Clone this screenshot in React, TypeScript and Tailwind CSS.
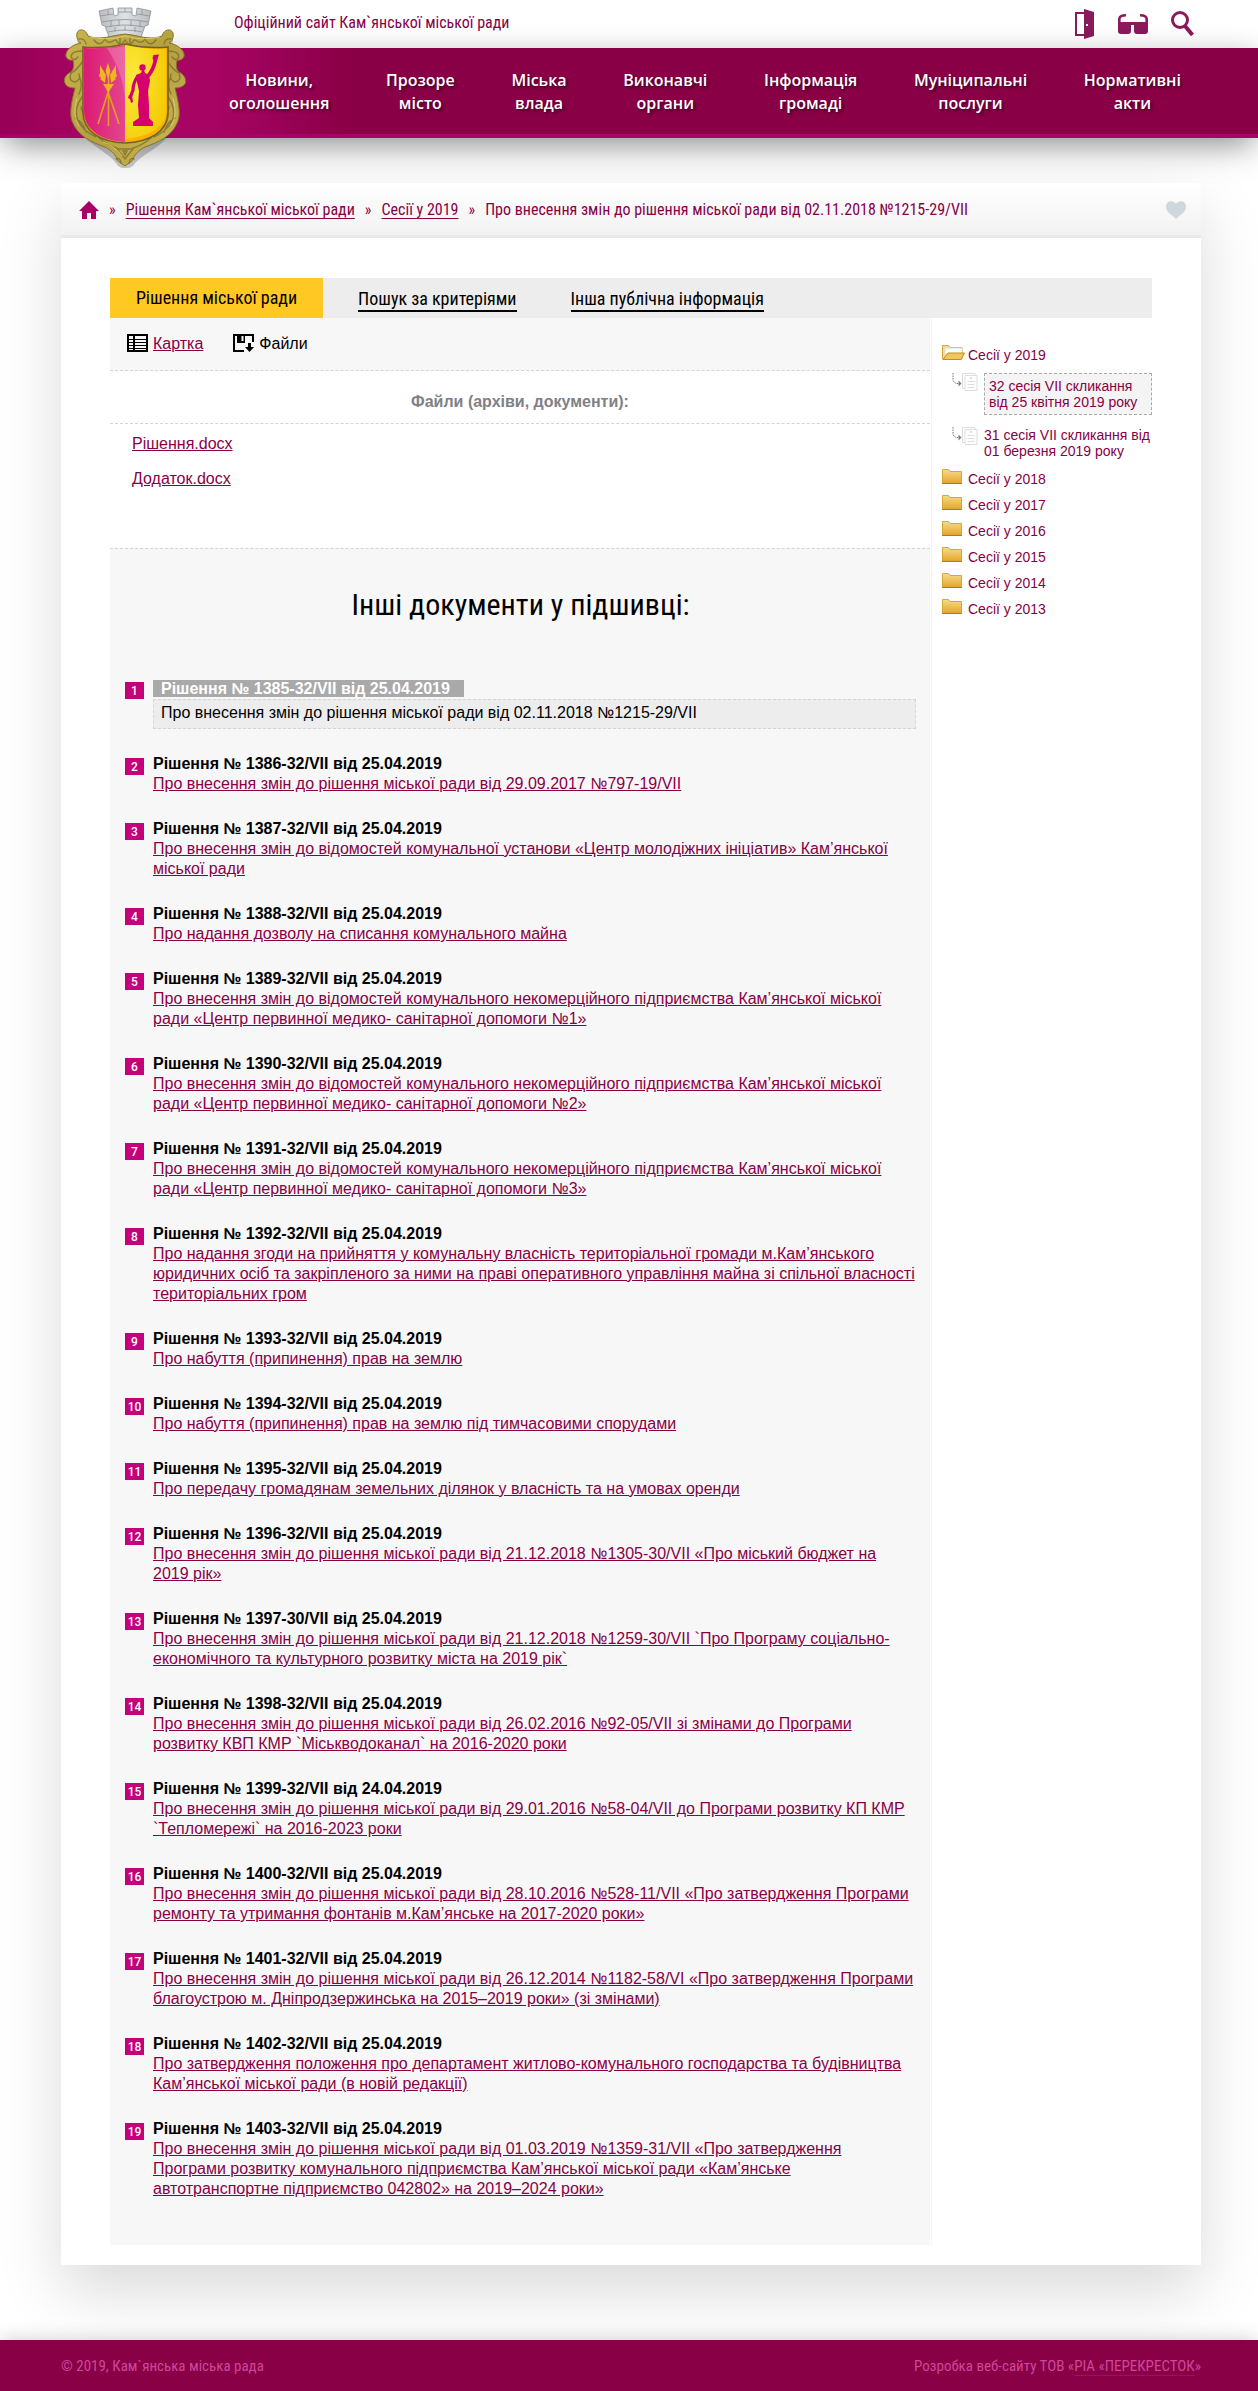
import React from "react";

const CONDENSED = "font-['Roboto_Condensed',Roboto,sans-serif]";

const navItems: [string, string][] = [
  ["Новини,", "оголошення"],
  ["Прозоре", "місто"],
  ["Міська", "влада"],
  ["Виконавчі", "органи"],
  ["Інформація", "громаді"],
  ["Муніципальні", "послуги"],
  ["Нормативні", "акти"],
];

const documents: [string, string][] = [
  ["Рішення № 1386-32/VII від 25.04.2019", "Про внесення змін до рішення міської ради від 29.09.2017 №797-19/VII"],
  ["Рішення № 1387-32/VII від 25.04.2019", "Про внесення змін до відомостей комунальної установи «Центр молодіжних ініціатив» Кам’янської міської ради"],
  ["Рішення № 1388-32/VII від 25.04.2019", "Про надання дозволу на списання комунального майна"],
  ["Рішення № 1389-32/VII від 25.04.2019", "Про внесення змін до відомостей комунального некомерційного підприємства Кам’янської міської ради «Центр первинної медико- санітарної допомоги №1»"],
  ["Рішення № 1390-32/VII від 25.04.2019", "Про внесення змін до відомостей комунального некомерційного підприємства Кам’янської міської ради «Центр первинної медико- санітарної допомоги №2»"],
  ["Рішення № 1391-32/VII від 25.04.2019", "Про внесення змін до відомостей комунального некомерційного підприємства Кам’янської міської ради «Центр первинної медико- санітарної допомоги №3»"],
  ["Рішення № 1392-32/VII від 25.04.2019", "Про надання згоди на прийняття у комунальну власність територіальної громади м.Кам’янського юридичних осіб та закріпленого за ними на праві оперативного управління майна зі спільної власності територіальних гром"],
  ["Рішення № 1393-32/VII від 25.04.2019", "Про набуття (припинення) прав на землю"],
  ["Рішення № 1394-32/VII від 25.04.2019", "Про набуття (припинення) прав на землю під тимчасовими спорудами"],
  ["Рішення № 1395-32/VII від 25.04.2019", "Про передачу громадянам земельних ділянок у власність та на умовах оренди"],
  ["Рішення № 1396-32/VII від 25.04.2019", "Про внесення змін до рішення міської ради від 21.12.2018 №1305-30/VII «Про міський бюджет на 2019 рік»"],
  ["Рішення № 1397-30/VII від 25.04.2019", "Про внесення змін до рішення міської ради від 21.12.2018 №1259-30/VII `Про Програму соціально-економічного та культурного розвитку міста на 2019 рік`"],
  ["Рішення № 1398-32/VII від 25.04.2019", "Про внесення змін до рішення міської ради від 26.02.2016 №92-05/VII зі змінами до Програми розвитку КВП КМР `Міськводоканал` на 2016-2020 роки"],
  ["Рішення № 1399-32/VII від 24.04.2019", "Про внесення змін до рішення міської ради від 29.01.2016 №58-04/VII до Програми розвитку КП КМР `Тепломережі` на 2016-2023 роки"],
  ["Рішення № 1400-32/VII від 25.04.2019", "Про внесення змін до рішення міської ради від 28.10.2016 №528-11/VII «Про затвердження Програми ремонту та утримання фонтанів м.Кам’янське на 2017-2020 роки»"],
  ["Рішення № 1401-32/VII від 25.04.2019", "Про внесення змін до рішення міської ради від 26.12.2014 №1182-58/VI «Про затвердження Програми благоустрою м. Дніпродзержинська на 2015–2019 роки» (зі змінами)"],
  ["Рішення № 1402-32/VII від 25.04.2019", "Про затвердження положення про департамент житлово-комунального господарства та будівництва Кам’янської міської ради (в новій редакції)"],
  ["Рішення № 1403-32/VII від 25.04.2019", "Про внесення змін до рішення міської ради від 01.03.2019 №1359-31/VII «Про затвердження Програми розвитку комунального підприємства Кам’янської міської ради «Кам’янське автотранспортне підприємство 042802» на 2019–2024 роки»"],
];

function Crest() {
  return (
    <svg viewBox="0 0 124 162" className="h-[162px] w-[124px]" aria-hidden="true">
      <defs>
        <linearGradient id="gold" x1="0" x2="1" y1="0" y2="1">
          <stop offset="0" stopColor="#c9b44e" />
          <stop offset=".5" stopColor="#b5a040" />
          <stop offset="1" stopColor="#cdb852" />
        </linearGradient>
        <linearGradient id="pink" x1="0" x2="1">
          <stop offset="0" stopColor="#dc1a74" />
          <stop offset="1" stopColor="#e4458f" />
        </linearGradient>
        <radialGradient id="yellow" cx=".2" cy=".35" r=".9">
          <stop offset="0" stopColor="#fdea3c" />
          <stop offset="1" stopColor="#f2c800" />
        </radialGradient>
        <linearGradient id="stone" x1="0" x2="1">
          <stop offset="0" stopColor="#b8bcc0" />
          <stop offset=".5" stopColor="#dfe2e4" />
          <stop offset="1" stopColor="#b8bcc0" />
        </linearGradient>
      </defs>
      <path d="M14 32C20 50 4 100 20 128 35 142 50 148 55 158l7 4 8-4c6-10 20-14 34-28 18-30 2-70 6-98z" fill="#000" opacity=".2" transform="translate(0 2)" />
      {/* mural crown */}
      <path d="M36 5l14-3 1 8 4-1V2h14v7l4 1 1-8 14 3-3 14-3 1-4 11q-16-4-32 0l-4-11-3-1z" fill="url(#stone)" stroke="#8d9194" strokeWidth=".8" />
      <path d="M37 10l13-2M55 6h14M74 8l13 2M39 16q23-5 46 0M43 21q19-4 38 0M45 26q17-4 34 0M45 4v5M62 2v4M79 4v5M48 15v6M56 14v6M68 14v6M77 15v6M52 21v5M62 20v5M72 21v5" stroke="#8d9194" strokeWidth=".8" fill="none" />
      {/* cartouche */}
      <path d="M14 27c2-5 9-4 11 3 10 4 20 1 30-1q7-2 14 0c10 2 20 5 30 1 2-7 9-8 11-3 1 4-1 9-4 10 6 1 14 5 15 11 1 4-3 7-7 6-1 5-1 10 2 12 5 2 8 8 6 12-2 3-7 4-10 4 3 12 6 25 3 33-6 16-20 21-33 26-8 4-11 9-13 14l-7 5-7-5c-2-5-5-10-13-14-13-5-27-10-33-26-3-8 0-21 3-33-4 0-9-1-10-5-2-4 1-9 6-11 3-3 3-7 2-12-4 1-8-2-7-6 1-6 9-10 15-11-3-1-5-6-4-10z" fill="url(#gold)" stroke="#86742a" strokeWidth="1" />
      <g fill="none" stroke="#74682c" strokeWidth="1.4" strokeLinecap="round" opacity=".7">
        <path d="M16 33q6-1 7 5M108 33q-6-1-7 5M19 45q-11 0-11 6 3 5 7 0M105 45q11 0 11 6-3 5-7 0M20 55q-7 10-12 12-3 8 4 9 6-2 4-8M104 55q7 10 12 12 3 8-4 9-6-2-4-8M17 72q3 8-1 16M107 72q-3 8 1 16" />
        <path d="M31 34q6 8 11-1 3 6 10 1M93 34q-6 8-11-1-3 6-10 1M53 34q4 8 9 0 5 8 9 0M57 32v6M67 32v6" />
        <path d="M19 91q-9 12-4 24 5 10 18 16M105 91q9 12 4 24-5 10-18 16M18 101q4 14 14 23M106 101q-4 14-14 23M12 112q8 4 11 14M112 112q-8 4-11 14M36 132q10 8 18 10M88 132q-10 8-18 10" />
        <path d="M54 143h16l-8 10zM60 145h4l-2 4zM53 153q4-2 5 4M71 153q-4-2-5 4" />
      </g>
      <g fill="none" stroke="#e2d27a" strokeWidth="1" opacity=".8">
        <path d="M27 31q18 4 35-1 17 5 35 1M14 92q-5 18 2 28M110 92q5 18-2 28M40 136q12 4 19 14" />
      </g>
      {/* shield */}
      <path d="M20 41q22 2 42-3 22 5 43 3v65c0 20-19 30-43 31-24-1-42-11-42-31z" fill="#fcb000" stroke="#6e6228" strokeWidth="1.6" />
      <path d="M21 42q22 1 41-3v97c-22-1-41-11-41-31z" fill="url(#pink)" />
      <path d="M62 39q20 5 41 4v61c0 18-18 27-41 29z" fill="url(#yellow)" />
      <path d="M44 42q9 0 18-2v54Q60 66 44 42z" fill="#fff" opacity=".2" />
      {/* torches */}
      <g stroke="#e0a020" strokeWidth="1.6" fill="none">
        <path d="M35 118l12-38M45.500 120V68M56 118L43 80" />
      </g>
      <path d="M45 57l2.500 8-2.500 8-2.500-8zM37 59l6 10-1 8-5-4 1-1-2-2 1-3zM53 59l-6 10 1 8 5-4-1-1 2-2-1-3zM40 78h11l-5.500 8z" fill="#eeb71f" />
      {/* figure */}
      <g fill="#d4006f">
        <circle cx="79.500" cy="61.500" r="3.200" />
        <path d="M90.500 49l5.500-.5-2 6.500h-3.500l-1-3z" />
        <path d="M73 69l5-2 1-3h2l1 3 4 2 1 6-2 10 1 14v13l4 4v4H70v-4l6-4-1-13 1-14-2-9z" />
        <path d="M84.500 70.500Q90 65 92.500 54" fill="none" stroke="#d4006f" strokeWidth="3.600" />
        <path d="M74 71Q70 78 70 84L67.500 91" fill="none" stroke="#d4006f" strokeWidth="3.200" />
        <path d="M66 89l3 1 1 6-2 1-1-4-2-1z" />
      </g>
    </svg>
  );
}

function DoorIcon() {
  return (
    <svg viewBox="0 0 20 30" className="h-[30px] w-5" fill="#8b1a5b" aria-hidden="true">
      <path d="M0 3h9v2H2v20h7v2H0z" />
      <path fillRule="evenodd" d="M9 0l10 3v24L9 30zM11 15v2h2v-2z" />
    </svg>
  );
}

function GlassesIcon() {
  return (
    <svg viewBox="0 0 30 20" className="h-5 w-[30px]" aria-hidden="true">
      <path d="M1.300 10V5Q1.500 1.300 8 1.300M28.700 10V5Q28.500 1.300 22 1.300" fill="none" stroke="#8b1a5b" strokeWidth="2.600" />
      <path d="M0 8h30v9q0 3-3 3h-8q-3 0-3-3v-6h-3v6q0 3-3 3H3q-3 0-3-3z" fill="#8b1a5b" />
    </svg>
  );
}

function SearchIcon() {
  return (
    <svg viewBox="0 0 24 26" className="h-[26px] w-6" fill="none" stroke="#8b1a5b" aria-hidden="true">
      <circle cx="9" cy="9" r="7.500" strokeWidth="3" />
      <path d="M14 15l7.500 9" strokeWidth="4" />
    </svg>
  );
}

function HomeIcon() {
  return (
    <svg viewBox="0 0 20 18" className="h-[18px] w-5" fill="#a80064" aria-hidden="true">
      <path d="M10 0l10 10h-3v8h-5v-6H8v6H3v-8H0z" />
    </svg>
  );
}

function HeartIcon() {
  return (
    <svg viewBox="0 0 20 18" className="h-[18px] w-5" fill="#d0d7dc" aria-hidden="true">
      <path d="M10 3C8-1 0-1 0 6c0 5 6 8 10 12 4-4 10-7 10-12 0-7-8-7-10-3z" />
    </svg>
  );
}

function CardIcon() {
  return (
    <svg viewBox="0 0 21 18" className="h-[18px] w-[21px]" fill="none" stroke="#000" aria-hidden="true">
      <rect x="1" y="1" width="19" height="16" strokeWidth="2" />
      <path d="M2 5.500h17M2 8.500h17M2 11.500h17M2 14.500h17" />
      <path d="M7 2v14" strokeWidth="2" />
    </svg>
  );
}

function SaveIcon() {
  return (
    <svg viewBox="0 0 21 18" className="h-[18px] w-[21px]" aria-hidden="true">
      <path d="M11 17H1V1h19v7" fill="none" stroke="#000" strokeWidth="2" />
      <path d="M4 1h8v8H4zM15 9h3v4h3l-4.500 5-4.500-5h3z" />
      <path d="M8.500 2h2v5h-2z" fill="#f7f7f7" />
    </svg>
  );
}

function FolderIcon() {
  return (
    <svg viewBox="0 0 20 15" className="h-[15px] w-5" aria-hidden="true">
      <defs>
        <linearGradient id="folder" x1="0" x2="0" y1="0" y2="1">
          <stop offset="0" stopColor="#f6dc8c" />
          <stop offset="1" stopColor="#e5a52c" />
        </linearGradient>
      </defs>
      <path d="M.5 14V.5h6L8 2.500h11.500V14z" fill="url(#folder)" stroke="#dca62c" />
      <path d="M0 14.500h20" stroke="#b97812" />
    </svg>
  );
}

function OpenFolderIcon() {
  return (
    <svg viewBox="0 0 23 15" className="h-[15px] w-[23px]" aria-hidden="true">
      <path d="M.5 14V.5h6L8 2.500h12V14z" fill="#f6dc8c" stroke="#dca62c" />
      <path d="M3 3h17v6H3z" fill="#fff" stroke="#ddd" />
      <path d="M1 14.500L6 8h16.500l-3.500 6.500z" fill="#efc75f" stroke="#c98c18" />
    </svg>
  );
}

function SheetIcon() {
  return (
    <svg viewBox="0 0 26 18" className="h-[18px] w-[26px]" fill="none" aria-hidden="true">
      <path d="M1 0v8l3 2.500h4" stroke="#777" strokeDasharray="1.500 1" />
      <path d="M6.500 7.500v6l3-3z" fill="#777" />
      <path d="M13 15.500h-2.500V.5H23V2" stroke="#ddd" />
      <path d="M13 2.500h12v15H13zM15.500 8.500h7M15.500 11.500h7M15.500 14.500h7" stroke="#ddd" />
      <path d="M18 4h2v2h-2z" fill="#ddd" />
    </svg>
  );
}

function Badge({ n }: { n: number }) {
  return (
    <span className="mt-1 flex h-[17px] w-[19px] shrink-0 items-center justify-center bg-[#c4007a] font-['Roboto',sans-serif] text-xs font-medium text-white">
      {n}
    </span>
  );
}

function SideFolder({ year, open = false }: { year: number; open?: boolean }) {
  return (
    <a href="#" className="flex h-[26px] gap-1.5">
      <span className="w-5">{open ? <span className="flex w-[23px]"><OpenFolderIcon /></span> : <FolderIcon />}</span>
      <span className="pt-0.5">Сесії у {year}</span>
    </a>
  );
}

export default function App() {
  return (
    <div className="overflow-hidden bg-white font-['Liberation_Sans',Arial,sans-serif] text-base leading-5 text-black">
      <header>
        <div className="pl-1">
          <div className="mx-auto flex h-12 max-w-[1140px] items-start justify-between pl-[173px] pr-1.5">
            <p className={`${CONDENSED} pt-[13px] text-[#890046]`}>Офіційний сайт Кам`янської міської ради</p>
            <div className="flex items-center gap-[23px] pt-[9px]">
              <button type="button" aria-label="Вхід"><DoorIcon /></button>
              <button type="button" aria-label="Версія для людей з вадами зору"><GlassesIcon /></button>
              <button type="button" aria-label="Пошук"><SearchIcon /></button>
            </div>
          </div>
        </div>
        <nav className="relative z-10 h-[90px] border-b-4 border-[#a80464] bg-[linear-gradient(90deg,#960055_0%,#a80464_8%,#a80464_17%,#890046_28%)] pl-1 shadow-[0_14px_34px_-6px_rgba(0,0,0,0.38),0_0_24px_rgba(0,0,0,0.12)]">
          <div className="relative mx-auto max-w-[1140px] pl-[168px] pr-5">
            <a href="#" aria-label="Головна" className="absolute -top-[42px] left-0.5"><Crest /></a>
            <ul className="flex justify-between pt-[21px]">
              {navItems.map(([a, b]) => (
                <li key={a}>
                  <a href="#" className="block text-center font-['Open_Sans',sans-serif] text-base leading-[23px] font-semibold text-white [text-shadow:2px_2px_3px_rgba(0,0,0,0.5)]">
                    {a}<br />{b}
                  </a>
                </li>
              ))}
            </ul>
          </div>
        </nav>
      </header>

      <div className="pt-[45px] pl-1">
        <div className="mx-auto max-w-[1140px] shadow-[0_26px_60px_rgba(0,0,0,0.15)]">
          <div className={`${CONDENSED} flex h-[55px] items-center border-b-[3px] border-[#e9e9e9] bg-linear-to-b from-white to-[#f2f2f2] px-[15px] pt-0.5 text-[#890046]`}>
            <a href="#" aria-label="Головна" className="ml-[3px]"><HomeIcon /></a>
            <span className="px-2.5">»</span>
            <a href="#" className="underline underline-offset-3">Рішення Кам`янської міської ради</a>
            <span className="px-2.5">»</span>
            <a href="#" className="underline underline-offset-3">Сесії у 2019</a>
            <span className="px-2.5">»</span>
            <span>Про внесення змін до рішення міської ради від 02.11.2018 №1215-29/VII</span>
            <button type="button" aria-label="В обране" className="ml-auto"><HeartIcon /></button>
          </div>

          <div className="bg-white px-[49px] pt-10 pb-5">
            <div className={`${CONDENSED} flex h-10 items-start bg-[#ededed] text-lg`}>
              <a href="#" className="flex h-10 w-[213px] items-center justify-center bg-[#ffc822]">Рішення міської ради</a>
              <a href="#" className="ml-[35px] mt-2.5 border-b-2 border-black leading-[22px]">Пошук за критеріями</a>
              <a href="#" className="ml-[54px] mt-2.5 border-b-2 border-black leading-[22px]">Інша публічна інформація</a>
            </div>

            <div className="flex items-stretch">
              <main className="min-w-0 flex-1 border-r border-[#f5f5f5] pr-px">
                <div className="flex h-[53px] gap-[30px] border-b border-dashed border-[#d4d4d4] bg-[#f7f7f7] pt-4 pl-[17px]">
                  <a href="#" className="flex items-start gap-[5px] text-[#890046] underline"><CardIcon />Картка</a>
                  <span className="flex items-start gap-[5px]"><SaveIcon />Файли</span>
                </div>
                <h2 className="h-[53px] border-b border-dashed border-[#d4d4d4] pt-[21px] text-center font-bold text-[#808085]">Файли (архіви, документи):</h2>
                <ul className="flex h-[124px] flex-col items-start gap-[15px] pt-2.5 pl-[22px]">
                  <li><a href="#" className="text-[#890046] underline">Рішення.docx</a></li>
                  <li><a href="#" className="text-[#890046] underline">Додаток.docx</a></li>
                </ul>

                <section className="border-t border-dashed border-[#d4d4d4] bg-[#f7f7f7] pr-3.5 pb-[46px] pl-[15px]">
                  <h1 className={`${CONDENSED} pt-9 text-center text-3xl leading-10`}>Інші документи у підшивці:</h1>
                  <ol className="mt-[53px] flex flex-col gap-[25px]">
                    <li className="flex gap-[9px]">
                      <Badge n={1} />
                      <div className="min-w-0 flex-1 pt-0.5">
                        <h3 className="mb-0.5 h-[17px] w-[311px] bg-[#a9a9a9] pl-2 leading-[17px] font-bold whitespace-nowrap text-white">Рішення № 1385-32/VII від 25.04.2019</h3>
                        <p className="h-[30px] border border-dashed border-[#d4d4d4] bg-[#ededed] pt-[3px] pl-[7px]">Про внесення змін до рішення міської ради від 02.11.2018 №1215-29/VII</p>
                      </div>
                    </li>
                    {documents.map(([title, text], i) => (
                      <li key={title} className="flex gap-[9px]">
                        <Badge n={i + 2} />
                        <div className="min-w-0 flex-1">
                          <h3 className="font-bold">{title}</h3>
                          <a href="#" className="block text-[#890046] underline">{text}</a>
                        </div>
                      </li>
                    ))}
                  </ol>
                </section>
              </main>

              <aside className="w-[220px] pt-[27px] pl-2.5 text-sm leading-4 text-[#890046]">
                <SideFolder year={2019} open />
                <ul className="mb-2.5 flex flex-col gap-3 pt-0.5 pl-2.5">
                  <li className="flex gap-1.5">
                    <SheetIcon />
                    <a href="#" className="flex-1 border border-dashed border-[#aaa] bg-[#f4f4f4] py-1 pl-1 whitespace-nowrap">32 сесія VII скликання<br />від 25 квітня 2019 року</a>
                  </li>
                  <li className="flex gap-1.5">
                    <SheetIcon />
                    <a href="#" className="whitespace-nowrap">31 сесія VII скликання від<br />01 березня 2019 року</a>
                  </li>
                </ul>
                {[2018, 2017, 2016, 2015, 2014, 2013].map((y) => <SideFolder key={y} year={y} />)}
              </aside>
            </div>
          </div>
        </div>
      </div>

      <footer className={`${CONDENSED} relative mt-[75px] bg-[#890046] pl-1 text-[15px] text-[#d0479a] shadow-[0_0_20px_rgba(0,0,0,0.2)]`}>
        <div className="mx-auto flex h-[51px] max-w-[1140px] items-center justify-between">
          <p>© 2019, Кам`янська міська рада</p>
          <p>Розробка веб-сайту ТОВ «<a href="#" className="border-b border-[#b4006e]">РІА «ПЕРЕКРЕСТОК</a>»</p>
        </div>
      </footer>
    </div>
  );
}
